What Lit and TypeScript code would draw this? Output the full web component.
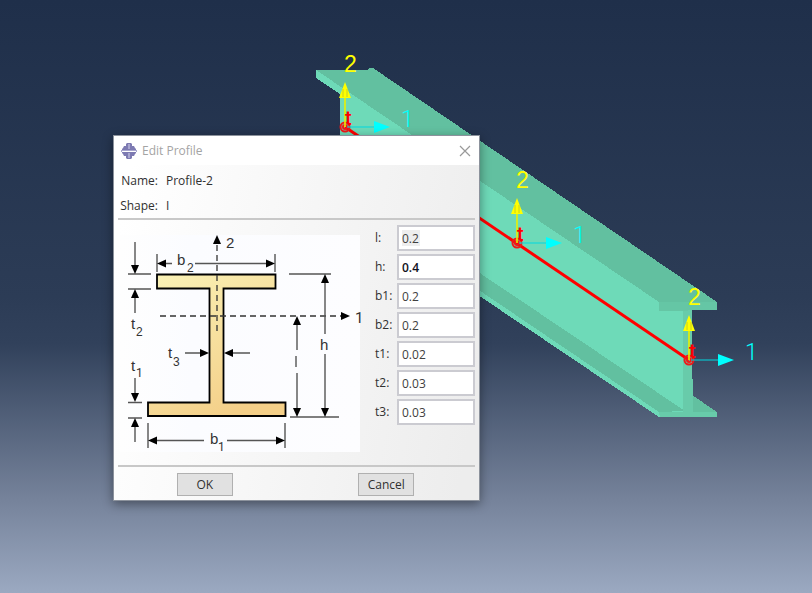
import { LitElement, html, svg, css } from "lit";
import { customElement, property } from "lit/decorators.js";

/** Local beam axes: node marker, tangent "t", axis 1 (cyan) and axis 2 (yellow). */
const triad = (x: number, y: number) => svg`
  <g transform="translate(${x} ${y})">
    <circle r="4.5" class="node" />
    <circle r="2" class="node" />
    <path d="M0 0V-30" class="axis two-line" />
    <path d="M0 -45L6 -29H-6Z" class="two" />
    <path d="M-2 -30V-38M2 -30V-38" class="notch" />
    <path d="M2 0H29" class="axis one-line" />
    <path d="M45 0L29 6V-6Z" class="one" />
    <text x="0" y="-2" class="tangent">t</text>
    <text x="-1" y="-55" class="label two">2</text>
    <text x="56" y="0" class="label plain one">1</text>
  </g>`;

@customElement("beam-scene")
export class BeamScene extends LitElement {
  static styles = css`
    :host { display: block; }
    .scene { display: block; width: 100%; height: 100%; }
    .faces { shape-rendering: crispEdges; }
    .top { fill: #62c0a0; }
    .side { fill: #6edab8; }
    .end { fill: #68cbaa; }
    .lip { fill: #65c6a5; }
    .beam-line { stroke: #ff0000; stroke-width: 3; fill: none; }
    .node { fill: none; stroke: #f01818; stroke-width: 2; }
    .axis { fill: none; }
    .two-line { stroke: #e8f000; stroke-width: 2; stroke-opacity: 0.8; }
    .one-line { stroke: #00d8e0; stroke-width: 1; }
    .notch { stroke: #c8d020; stroke-width: 1; }
    .two { fill: #ffff00; }
    .one { fill: #00ffff; }
    .label { font: 23px "Liberation Sans", sans-serif; }
    .plain { font-family: Roboto, sans-serif; font-weight: 300; }
    .tangent { font: 500 20px Roboto, sans-serif; fill: #ff0000; }
  `;

  render() {
    return html`
      <svg class="scene" viewBox="0 0 812 593" preserveAspectRatio="xMidYMin slice" role="img" aria-label="Rendered I-beam">
        <g class="faces">
          <path class="side" d="M316 70L659 302H692V411L659 417L340 200V94L316 78Z" />
          <path class="top" d="M316 70H368L369 68H373L717 302H659Z" />
          <path class="top" d="M340 179L685 411L659 412L340 196Z" />
          <path class="side" d="M340 196L659 412V417L340 202Z" />
          <path class="top" d="M692 395L717 412H692Z" />
          <path class="end" d="M683 310H692V378L693 380V412H717V417H660L659 412H683Z" />
          <path class="lip" d="M659 302H717V310H692L683 311H659Z" />
        </g>
        <path class="beam-line" d="M345 127L689 360" />
        ${triad(345, 127)} ${triad(517, 243)} ${triad(689, 360)}
      </svg>
    `;
  }
}

type Dir = "up" | "down" | "left" | "right";

const head = (x: number, y: number, dir: Dir) => {
  const shapes: Record<Dir, string> = {
    up: "l-4 9h8z",
    down: "l-4 -9h8z",
    left: "l9 -4v8z",
    right: "l-9 -4v8z",
  };
  return svg`<path class="head" d="M${x} ${y}${shapes[dir]}" />`;
};

@customElement("profile-diagram")
export class ProfileDiagram extends LitElement {
  static styles = css`
    :host { display: block; }
    .diagram { display: block; width: 100%; overflow: visible; background: linear-gradient(90deg, #fefefe, #fbfcff 30%, #fdfdff); }
    .dim { stroke: #555555; stroke-width: 1.4; fill: none; }
    .dash { stroke: #333333; stroke-width: 1.3; stroke-dasharray: 6 4; fill: none; }
    .section { fill: url(#steel); stroke: #000000; stroke-width: 1.8; }
    .head { fill: #000000; }
    .sym { font: 15px "Liberation Sans", sans-serif; fill: #333333; }
    .sub { font: 12px "Liberation Sans", sans-serif; fill: #333333; }
    .plain { font-family: Roboto, sans-serif; }
  `;

  render() {
    return html`
      <svg class="diagram" viewBox="120 235 240 217" role="img" aria-label="I profile dimensions">
        <defs>
          <linearGradient id="steel" x1="0" y1="0" x2="0.6" y2="1">
            <stop offset="0" stop-color="#faf3b8" />
            <stop offset="1" stop-color="#f4cf88" />
          </linearGradient>
        </defs>
        <path class="section" d="M157 274.5H275.5V288.5H223.5V402.5H285.5V416H148V402.5H209.5V288.5H157Z" />
        <path class="dash" d="M217 245V331M160 316H342" />
        <path class="dim" d="M135 242V266M128 274H151M128 289H151M135 297V313
          M157 254V272M165 263.5H172M195 263.5H268M275 254V272
          M289 274H331M325 282V334M325 354V409M290 417H339
          M297 324V350M296 356V367M297 373V409
          M185 353H201M232 353H250
          M135 378V394M128 402.5H142M128 418H142M135 426V442
          M148 423V448M156 440.5H204M227 440.5H277M285 423V448" />
        ${head(217, 235, "up")} ${head(350, 316, "right")}
        ${head(135, 274, "down")} ${head(135, 289, "up")}
        ${head(157, 263.5, "left")} ${head(275, 263.5, "right")}
        ${head(325, 274, "up")} ${head(325, 417, "down")}
        ${head(297, 316, "up")} ${head(297, 417, "down")}
        ${head(209, 353, "right")} ${head(224, 353, "left")}
        ${head(135, 402, "down")} ${head(135, 418, "up")}
        ${head(148, 440.5, "left")} ${head(285, 440.5, "right")}
        <text class="sym" x="226" y="248">2</text>
        <text class="sym plain" x="355" y="323">1</text>
        <text class="sym" x="177" y="265">b</text><text class="sub" x="187" y="272">2</text>
        <text class="sym" x="131" y="329">t</text><text class="sub" x="136" y="336">2</text>
        <text class="sym" x="168" y="358">t</text><text class="sub" x="173" y="366">3</text>
        <text class="sym" x="131" y="371">t</text><text class="sub plain" x="136" y="377">1</text>
        <text class="sym" x="210" y="444">b</text><text class="sub plain" x="218" y="451">1</text>
        <text class="sym" x="320" y="350">h</text>
      </svg>
    `;
  }
}

interface Field {
  name: string;
  value: string;
  state?: "marked" | "strong";
}

@customElement("edit-profile-dialog")
export class EditProfileDialog extends LitElement {
  @property({ attribute: false }) fields: Field[] = [
    { name: "l", value: "0.2", state: "marked" },
    { name: "h", value: "0.4", state: "strong" },
    { name: "b1", value: "0.2" },
    { name: "b2", value: "0.2" },
    { name: "t1", value: "0.02" },
    { name: "t2", value: "0.03" },
    { name: "t3", value: "0.03" },
  ];

  static styles = css`
    :host {
      display: block;
      box-sizing: border-box;
      border: 1px solid #8c929c;
      background: linear-gradient(100deg, #ffffff 5%, #f6f6f6 50%, #ededed 95%);
      box-shadow: 0 3px 10px rgba(0, 0, 0, 0.4);
      font: 12px/16px "Open Sans", "Noto Sans", sans-serif;
      color: #303030;
    }
    .titlebar { display: flex; align-items: center; gap: 5px; height: 29px; padding: 0 8px 0 7px; background: #ffffff; }
    .logo { width: 16px; height: 16px; }
    .title { flex: 1; margin: 0; font-size: 12px; font-weight: 400; color: #a4a4a4; }
    .close { display: flex; padding: 0; border: 0; background: none; }
    .close-icon { width: 12px; height: 12px; }
    .info { display: grid; grid-template-columns: 38px 1fr; column-gap: 8px; margin: 0; padding: 3px 6px 0; line-height: 25px; }
    .term { text-align: right; }
    .detail { margin: 0; }
    .rule { height: 2px; margin: 0 4px; border: 0; background: #c8c8c8; }
    .main { display: flex; gap: 15px; padding: 5px 4px 13px 6px; }
    .picture { flex: 1; margin-top: 10px; }
    .fields { display: grid; grid-template-columns: 22px 78px; row-gap: 3px; align-content: start; }
    .label { align-self: center; white-space: nowrap; }
    .input {
      box-sizing: border-box; width: 100%; height: 26px; padding: 0 3px;
      border: 2px solid #cbcbd1; border-radius: 0; background-color: #ffffff;
      font: inherit; color: #404040; outline: none;
    }
    .marked { background: linear-gradient(#eeeeee, #eeeeee) 3px 3px / 18px 16px no-repeat #ffffff; }
    .strong { font-weight: 600; color: #101020; }
    .actions { display: grid; grid-template-columns: 1fr 1fr; justify-items: center; padding: 6px 2px 4px 0; }
    .button {
      box-sizing: border-box; width: 56px; height: 23px; padding: 0;
      border: 1px solid #b0b0b0; border-radius: 0; background: #e1e1e1; font: inherit; color: #303030;
    }
  `;

  render() {
    return html`
      <header class="titlebar">
        <svg class="logo" viewBox="0 0 16 16" aria-hidden="true">
          <path fill="#7d7ab2" d="M5 1L6 0H10L11 1V3H13L14 5L15 6V7H1V6L2 5L3 3H5ZM1 9H15V10L14 11L13 13H11V15L10 16H6L5 15V13H3L2 11L1 10Z" />
          <path fill="#a9a7cf" d="M7 1H9V6H7ZM7 10H9V15H7ZM0 7H16V8H0ZM0 8H1V9H0ZM15 8H16V9H15Z" />
        </svg>
        <h1 class="title">Edit Profile</h1>
        <button class="close" type="button" aria-label="Close">
          <svg class="close-icon" viewBox="0 0 12 12"><path d="M1 1L11 11M11 1L1 11" stroke="#999999" stroke-width="1.2" /></svg>
        </button>
      </header>
      <dl class="info">
        <dt class="term">Name:</dt><dd class="detail">Profile-2</dd>
        <dt class="term">Shape:</dt><dd class="detail">I</dd>
      </dl>
      <hr class="rule" />
      <div class="main">
        <profile-diagram class="picture"></profile-diagram>
        <div class="fields">
          ${this.fields.map(
            (f) => html`
              <label class="label" for=${f.name}>${f.name}:</label>
              <input class="input ${f.state ?? ""}" id=${f.name} type="text" .value=${f.value} />
            `
          )}
        </div>
      </div>
      <hr class="rule" />
      <div class="actions">
        <button class="button" type="button">OK</button>
        <button class="button" type="button">Cancel</button>
      </div>
    `;
  }
}

@customElement("app-root")
export class AppRoot extends LitElement {
  static styles = css`
    :host {
      display: block;
      position: relative;
      min-height: 100vh;
      overflow: hidden;
      background: linear-gradient(#1f2f4a 0%, #2c3c56 50%, #31415b 58%, #75829a 84%, #9ba9c1 100%);
    }
    .viewport { position: absolute; inset: 0; }
    .dialog { position: absolute; left: 113px; top: 135px; width: 367px; }
  `;

  render() {
    return html`
      <beam-scene class="viewport"></beam-scene>
      <edit-profile-dialog class="dialog" role="dialog" aria-label="Edit Profile"></edit-profile-dialog>
    `;
  }
}
